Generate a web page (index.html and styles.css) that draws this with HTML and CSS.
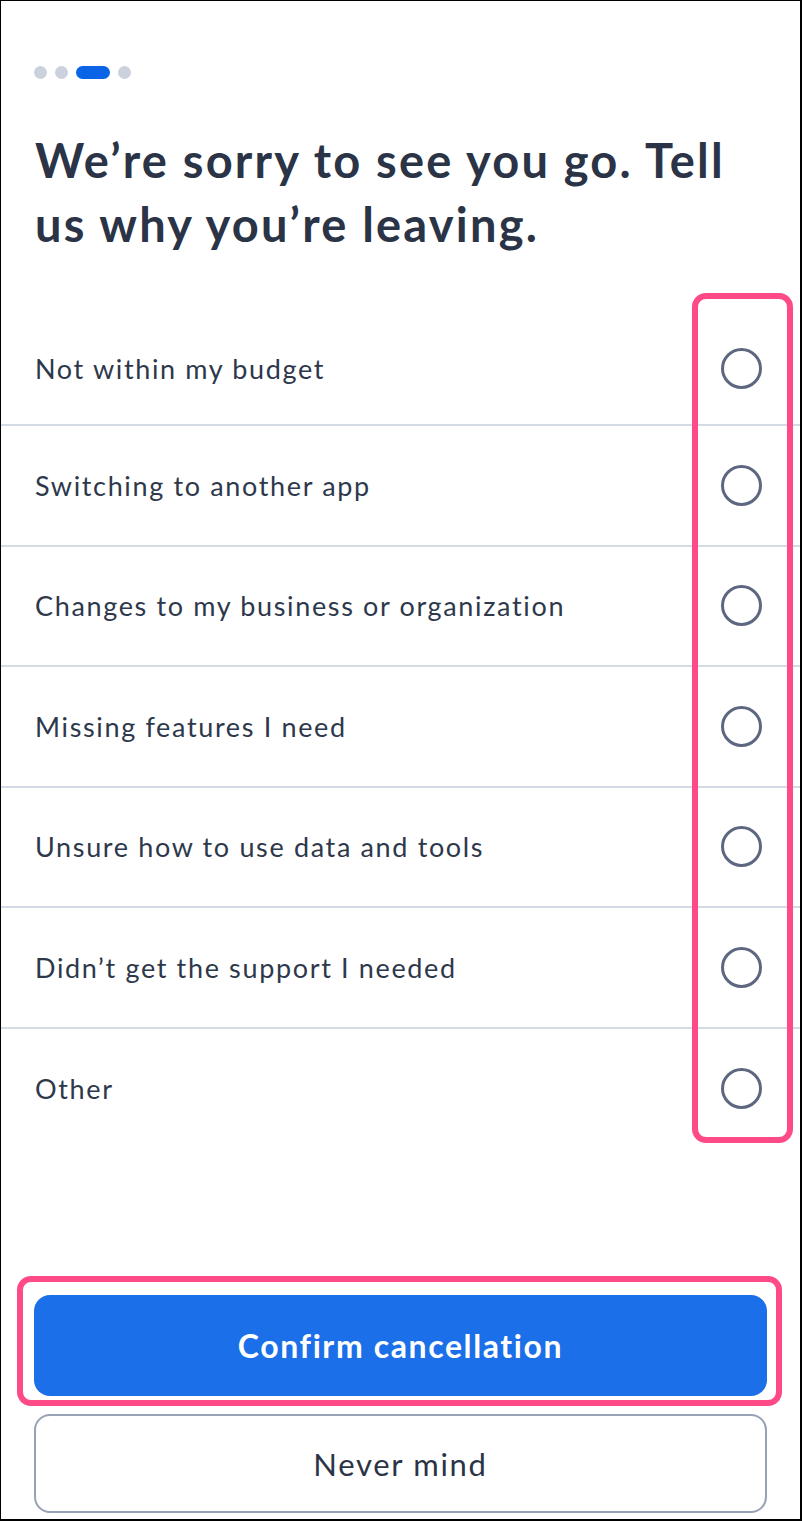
FILE: index.html
```html
<!DOCTYPE html>
<html lang="en">
<head>
<meta charset="utf-8">
<title>Cancel subscription</title>
<link rel="stylesheet" href="styles.css">
</head>
<body>
<div class="page">
  <div class="steps">
    <span class="dot"></span>
    <span class="dot"></span>
    <span class="dot active"></span>
    <span class="dot"></span>
  </div>
  <h1 class="title">We’re sorry to see you go. Tell us why you’re leaving.</h1>
  <ul class="reasons">
    <li class="reason first"><span class="label">Not within my budget</span><span class="radio"></span></li>
    <li class="reason"><span class="label">Switching to another app</span><span class="radio"></span></li>
    <li class="reason"><span class="label">Changes to my business or organization</span><span class="radio"></span></li>
    <li class="reason"><span class="label">Missing features I need</span><span class="radio"></span></li>
    <li class="reason"><span class="label">Unsure how to use data and tools</span><span class="radio"></span></li>
    <li class="reason"><span class="label">Didn’t get the support I needed</span><span class="radio"></span></li>
    <li class="reason last"><span class="label">Other</span><span class="radio"></span></li>
  </ul>
  <div class="actions">
    <button class="btn primary">Confirm cancellation</button>
    <button class="btn secondary">Never mind</button>
  </div>
  <div class="highlight highlight-radios"></div>
  <div class="highlight highlight-confirm"></div>
</div>
</body>
</html>
```
FILE: styles.css
```css
* { box-sizing: border-box; }
html, body { margin: 0; padding: 0; background: #fff; }
body { width: 802px; height: 1521px; overflow: hidden; }
.page {
  position: relative;
  width: 802px;
  height: 1521px;
  border-style: solid;
  border-color: #000;
  border-width: 1px 2px 2px 1px;
  display: flex;
  flex-direction: column;
  font-family: Lato, "Open Sans", sans-serif;
  color: #2e384b;
}
.steps {
  display: flex;
  gap: 8px;
  margin: 65px 0 0 33px;
  height: 13px;
}
.dot {
  width: 13px;
  height: 13px;
  border-radius: 7px;
  background: #cbd2de;
}
.dot.active { width: 34px; background: #0b63e5; }
.title {
  margin: 49px 30px 0 34px;
  font-size: 47px;
  line-height: 64px;
  font-weight: 700;
  letter-spacing: 2.2px;
  color: #2b3446;
}
.reasons {
  list-style: none;
  margin: 57px 0 0 0;
  padding: 0;
}
.reason {
  display: flex;
  align-items: center;
  justify-content: space-between;
  height: 120.5px;
  padding: 0 38px 0 34px;
  border-bottom: 2px solid #d3dae3;
}
.reason.first { height: 113px; }
.reason.last { border-bottom: none; }
.label { font-size: 27px; letter-spacing: 1.65px; color: #2e384b; }
.radio {
  width: 41px;
  height: 41px;
  border-radius: 50%;
  border: 3.5px solid #5d6880;
}
.actions {
  margin-top: auto;
  padding: 0 33px 6px 33px;
  display: flex;
  flex-direction: column;
  gap: 18px;
}
.btn {
  width: 100%;
  font-family: Lato, "Open Sans", sans-serif;
  border-radius: 16px;
  cursor: pointer;
}
.btn.primary {
  height: 101px;
  background: #1b6fe8;
  color: #fff;
  border: none;
  font-size: 32px;
  letter-spacing: 1.6px;
  font-weight: 700;
}
.btn.secondary {
  height: 99px;
  background: #fff;
  color: #2b3446;
  border: 2px solid #97a2b6;
  font-size: 31px;
  letter-spacing: 1.7px;
}
.highlight {
  position: absolute;
  border: 6px solid #fe4a86;
  border-radius: 14px;
  pointer-events: none;
}
.highlight-radios { left: 691px; top: 292px; width: 101px; height: 850px; }
.highlight-confirm { left: 16px; top: 1275px; width: 765px; height: 130px; }
```
